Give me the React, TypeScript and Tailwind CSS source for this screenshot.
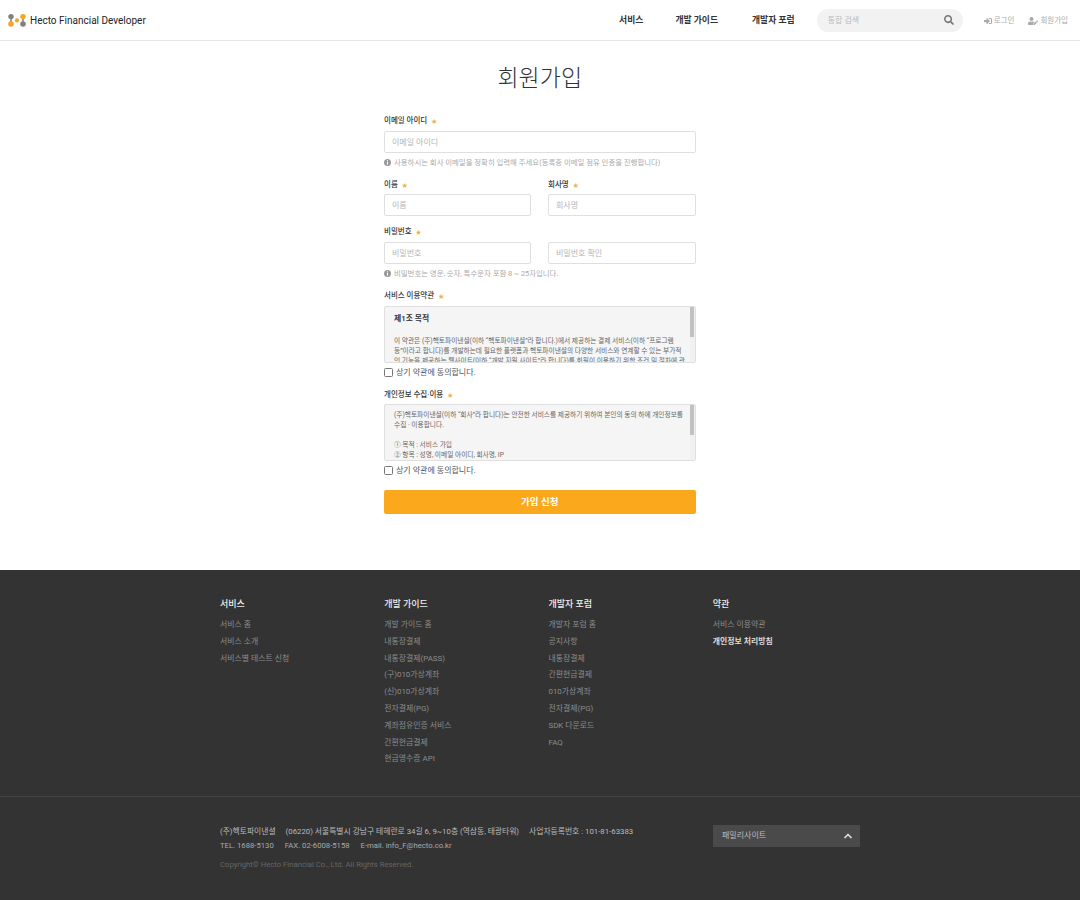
import React from "react";
import { ChevronUp } from "lucide-react";
import { FaSearch, FaSignInAlt, FaUserEdit } from "react-icons/fa";

const footerCols = [
  { title: "서비스", links: ["서비스 홈", "서비스 소개", "서비스별 테스트 신청"] },
  {
    title: "개발 가이드",
    links: ["개발 가이드 홈", "내통장결제", "내통장결제(PASS)", "(구)010가상계좌", "(신)010가상계좌", "전자결제(PG)", "계좌점유인증 서비스", "간편현금결제", "현금영수증 API"],
  },
  {
    title: "개발자 포럼",
    links: ["개발자 포럼 홈", "공지사항", "내통장결제", "간편현금결제", "010가상계좌", "전자결제(PG)", "SDK 다운로드", "FAQ"],
  },
  { title: "약관", links: ["서비스 이용약관", "개인정보 처리방침"] },
];

const Logo = () => (
  <svg width="18" height="14" viewBox="0 0 18 14" className="shrink-0">
    <path d="M3 4V11" stroke="#8a8a8a" strokeWidth="1.6" />
    <path d="M15 4V11" stroke="#8a8a8a" strokeWidth="1.6" />
    <circle cx="3" cy="3.6" r="2.7" fill="#808080" />
    <circle cx="3" cy="11" r="2.8" fill="#f5a623" />
    <circle cx="9" cy="7.4" r="2.1" fill="#f5a623" />
    <circle cx="15" cy="3.6" r="2.7" fill="#f5a623" />
    <circle cx="15" cy="11" r="2.8" fill="#808080" />
  </svg>
);

const Label = ({ children, className = "" }: { children: React.ReactNode; className?: string }) => (
  <div className={`flex h-[12px] items-center text-[7.5px] font-medium text-[#333] ${className}`}>
    <span className="mt-[2px]">{children}</span>
    <span className="ml-[4px] text-[6px] text-[#f5b041]">★</span>
  </div>
);

const Field = ({ placeholder }: { placeholder: string }) => (
  <input
    placeholder={placeholder}
    className="block h-[22px] w-full rounded-[2px] border border-[#dfdfdf] bg-white px-[7px] text-[8px] outline-none placeholder:text-[#b5b5b5]"
  />
);

const InfoDot = () => (
  <svg width="7" height="7" viewBox="0 0 8 8" className="shrink-0">
    <circle cx="4" cy="4" r="4" fill="#999" />
    <rect x="3.4" y="1.4" width="1.2" height="1.2" fill="#fff" />
    <rect x="3.4" y="3.2" width="1.2" height="3.2" fill="#fff" />
  </svg>
);

const Hint = ({ children }: { children: React.ReactNode }) => (
  <div className="flex h-[12px] items-center gap-[3px] text-[7.4px] text-[#aaa]">
    <InfoDot />
    <span className="mt-[2px]">{children}</span>
  </div>
);

const TermsBox = ({ children }: { children: React.ReactNode }) => (
  <div className="flex h-[57px] overflow-hidden rounded-[2px] border border-[#dfdfdf] bg-[#f5f5f5]">
    <div className="flex-1 overflow-hidden pl-[9px] pr-[4px] pt-[5px] text-[6.7px] leading-[10px] text-[#666]">{children}</div>
    <div className="w-[5px] shrink-0 bg-[#f1f1f1]">
      <div className="h-[30px] w-[4px] bg-[#c1c1c1]" />
    </div>
  </div>
);

const Agree = () => (
  <label className="flex h-[18px] items-center gap-[3px] text-[8px] text-[#555]">
    <span className="h-[9px] w-[9px] rounded-[1.5px] border border-[#777] bg-white" />
    <span className="mt-[2px]">상기 약관에 동의합니다.</span>
  </label>
);

export default function App() {
  return (
    <div className="min-h-screen bg-white" style={{ fontFamily: 'Roboto, "Noto Sans CJK KR", sans-serif' }}>
      <header className="flex h-[41px] items-center border-b border-[#e6e6e6] pl-[8px] pr-[12px]">
        <div className="flex items-center gap-[4px]">
          <Logo />
          <span className="text-[10px] text-[#222]">Hecto Financial Developer</span>
        </div>
        <nav className="ml-auto mt-[2px] flex items-center text-[8.8px] font-semibold text-[#333]">
          <span>서비스</span>
          <span className="ml-[32px]">개발 가이드</span>
          <span className="ml-[34px]">개발자 포럼</span>
        </nav>
        <div className="ml-[22px] flex h-[23px] w-[146px] items-center justify-between rounded-full bg-[#f2f2f2] pl-[11px] pr-[9px] text-[8px] text-[#bbb]">
          <span className="mt-[2px]">통합 검색</span>
          <FaSearch size={10} className="text-[#777]" />
        </div>
        <div className="ml-[21px] mt-[2px] flex items-center gap-[14px] text-[7.5px] text-[#aaa]">
          <span className="flex items-center gap-[2px]">
            <FaSignInAlt size={8} />
            로그인
          </span>
          <span className="flex items-center gap-[2px]">
            <FaUserEdit size={10} />
            회원가입
          </span>
        </div>
      </header>

      <main className="ml-[384px] flex h-[529px] w-[311.5px] flex-col">
        <h1 className="mt-[21px] h-[34px] text-center text-[23px] font-light leading-[34px] text-[#333]">회원가입</h1>

        <Label className="mt-[18px]">이메일 아이디</Label>
        <div className="mt-[5px]">
          <Field placeholder="이메일 아이디" />
        </div>
        <div className="mt-[3px]">
          <Hint>사용하시는 회사 이메일을 정확히 입력해 주세요(등록중 이메일 점유 인증을 진행합니다)</Hint>
        </div>

        <div className="mt-[10px] flex justify-between">
          <div className="w-[147px]">
            <Label>이름</Label>
            <div className="mt-[4px]">
              <Field placeholder="이름" />
            </div>
          </div>
          <div className="w-[147.5px]">
            <Label>회사명</Label>
            <div className="mt-[4px]">
              <Field placeholder="회사명" />
            </div>
          </div>
        </div>

        <Label className="mt-[9px]">비밀번호</Label>
        <div className="mt-[5px] flex justify-between">
          <div className="w-[147px]">
            <Field placeholder="비밀번호" />
          </div>
          <div className="w-[147.5px]">
            <Field placeholder="비밀번호 확인" />
          </div>
        </div>
        <div className="mt-[3px]">
          <Hint>비밀번호는 영문, 숫자, 특수문자 포함 8 ~ 25자입니다.</Hint>
        </div>

        <Label className="mt-[10px]">서비스 이용약관</Label>
        <div className="mt-[5px]">
          <TermsBox>
            <p className="mb-[11px] mt-[1px] text-[7.8px] font-semibold leading-[12px] text-[#333]">제1조 목적</p>
            <p>
              이 약관은 (주)헥토파이낸셜(이하 “헥토파이낸셜”라 합니다.)에서 제공하는 결제 서비스(이하 “프로그램 등”이라고 합니다)를 개발하는데 필요한 플랫폼과 헥토파이낸셜의 다양한 서비스와 연계할 수 있는 부가적인 기능을 제공하는 웹사이트(이하 “개발 지원 사이트”라 합니다)를 회원이 이용하기 위한 조건 및 절차에 관한 사항을 규정합니다.
            </p>
          </TermsBox>
        </div>
        <Agree />

        <Label className="mt-[7px]">개인정보 수집·이용</Label>
        <div className="mt-[4px]">
          <TermsBox>
            <p>(주)헥토파이낸셜(이하 “회사”라 합니다)는 안전한 서비스를 제공하기 위하여 본인의 동의 하에 개인정보를 수집 · 이용합니다.</p>
            <p className="mt-[10px]">① 목적 : 서비스 가입</p>
            <p>② 항목 : 성명, 이메일 아이디, 회사명, IP</p>
            <p>③ 보유 및 이용기간 : 회원 탈퇴 시까지</p>
          </TermsBox>
        </div>
        <Agree />

        <button className="mt-[11px] h-[24px] w-full rounded-[2px] bg-[#fca81c] text-[9.5px] font-semibold text-white">가입 신청</button>
      </main>

      <footer className="h-[330px] bg-[#333333]">
        <div className="h-[227px] border-b border-[#444]">
          <div className="ml-[220px] grid w-[657px] grid-cols-4 pt-[27px]">
            {footerCols.map((col) => (
              <div key={col.title}>
                <div className="mb-[6px] h-[14px] text-[9px] font-medium leading-[14px] text-[#eee]">{col.title}</div>
                {col.links.map((l) => (
                  <div
                    key={l}
                    className={`h-[16.8px] text-[7.9px] leading-[16.8px] ${l === "개인정보 처리방침" ? "font-semibold text-[#ddd]" : "text-[#8c8c8c]"}`}
                  >
                    {l}
                  </div>
                ))}
              </div>
            ))}
          </div>
        </div>
        <div className="flex pl-[220px] pr-[220px] pt-[28px]">
          <div className="flex-1">
            <div className="flex h-[14px] items-center gap-[10px] text-[7.8px] text-[#bbb]">
              <span>(주)헥토파이낸셜</span>
              <span>(06220) 서울특별시 강남구 테헤란로 34길 6, 9~10층 (역삼동, 태광타워)</span>
              <span>사업자등록번호 : 101-81-63383</span>
            </div>
            <div className="flex h-[14px] items-center gap-[11px] text-[7.7px] text-[#aaa]">
              <span>TEL. 1688-5130</span>
              <span>FAX. 02-6008-5158</span>
              <span>E-mail. info_F@hecto.co.kr</span>
            </div>
            <div className="mt-[5px] h-[14px] text-[7.7px] leading-[14px] text-[#666]">Copyright© Hecto Financial Co., Ltd. All Rights Reserved.</div>
          </div>
          <div className="flex h-[22px] w-[147px] items-center justify-between bg-[#4a4a4a] pl-[9px] pr-[6px] text-[8px] text-[#bbb]">
            패밀리사이트
            <ChevronUp size={12} strokeWidth={3.5} className="text-[#ddd]" />
          </div>
        </div>
      </footer>
    </div>
  );
}
